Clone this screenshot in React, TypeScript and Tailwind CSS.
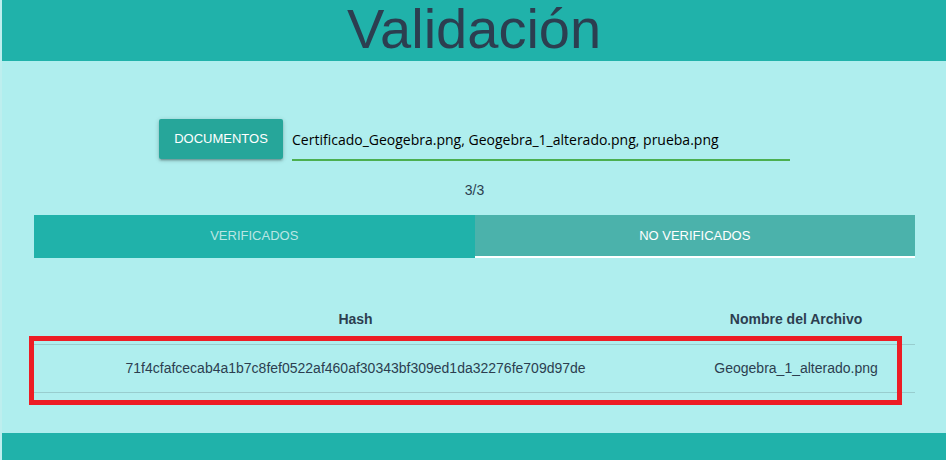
import { useState } from "react";

const records = [
  {
    hash: "71f4cfafcecab4a1b7c8fef0522af460af30343bf309ed1da32276fe709d97de",
    file: "Geogebra_1_alterado.png",
  },
];

const tabBase = "h-[43px] flex-1 cursor-pointer border-b-2 pt-0.5 text-[13px] uppercase";

export default function App() {
  const [tab, setTab] = useState("unverified");
  const [files, setFiles] = useState(
    "Certificado_Geogebra.png, Geogebra_1_alterado.png, prueba.png",
  );

  return (
    <div className="flex min-h-screen flex-col border-l-2 border-[#bdeeee] bg-[#afeeee] font-['Liberation_Sans',Arial,sans-serif] text-sm text-[#2c3e50]">
      <header className="bg-[#20b2aa] pb-[3px] text-center">
        <h1 className="text-[56px] leading-[58px]">Validación</h1>
      </header>

      <main className="pr-[31px] pb-10 pl-8 pt-[58px]">
        <form className="mx-auto flex max-w-[631px] gap-[9px]">
          <button
            type="button"
            className="h-10 w-[124px] cursor-pointer rounded-xs bg-[#26a69a] text-[13px] text-white uppercase shadow-[0_2px_2px_0_rgba(0,0,0,0.14),0_3px_1px_-2px_rgba(0,0,0,0.12),0_1px_5px_0_rgba(0,0,0,0.2)]"
          >
            Documentos
          </button>
          <input
            type="text"
            aria-label="Documentos seleccionados"
            value={files}
            onChange={(e) => setFiles(e.target.value)}
            className="h-[42px] min-w-0 flex-1 border-b-2 border-[#4caf50] bg-transparent pt-px font-['Open_Sans','Segoe_UI',sans-serif] text-sm text-black outline-none"
          />
        </form>

        <p className="mt-[19px] text-center leading-5">3/3</p>

        <div role="tablist" className="mt-[15px] flex bg-[#20b2aa]">
          <button
            type="button"
            role="tab"
            aria-selected={tab === "verified"}
            onClick={() => setTab("verified")}
            className={`${tabBase} ${tab === "verified" ? "border-white bg-[#4bb2ab] text-white" : "border-transparent text-white/70"}`}
          >
            Verificados
          </button>
          <button
            type="button"
            role="tab"
            aria-selected={tab === "unverified"}
            onClick={() => setTab("unverified")}
            className={`${tabBase} ${tab === "unverified" ? "border-white bg-[#4bb2ab] text-white" : "border-transparent text-white/70"}`}
          >
            No verificados
          </button>
        </div>

        <div className="relative mt-9">
          <table className="w-full table-fixed border-collapse text-center">
            <thead>
              <tr className="h-[50px] border-b border-[#98cdce]">
                <th className="w-[73%] font-bold">Hash</th>
                <th className="font-bold">Nombre del Archivo</th>
              </tr>
            </thead>
            <tbody>
              {records.map((r) => (
                <tr key={r.hash} className="h-12 border-b border-[#98cdce]">
                  <td>{r.hash}</td>
                  <td>{r.file}</td>
                </tr>
              ))}
            </tbody>
          </table>
          <div className="pointer-events-none absolute right-[13px] -bottom-3 -left-[5px] h-[69px] border-5 border-[#ed1c24]" />
        </div>
      </main>

      <footer className="min-h-[27px] flex-1 bg-[#20b2aa]" />
    </div>
  );
}
